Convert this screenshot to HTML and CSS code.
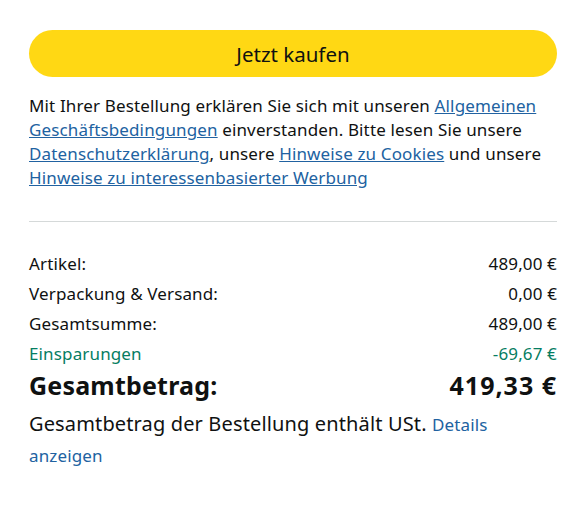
FILE: index.html
```html
<!DOCTYPE html>
<html lang="de">
<head>
    <meta charset="UTF-8">
    <title>Bestellung prüfen</title>
    <link rel="stylesheet" href="styles.css">
</head>
<body>
    <div class="checkout">
        <button class="buy-button" type="button">Jetzt kaufen</button>

        <p class="legal">
            Mit Ihrer Bestellung erklären Sie sich mit unseren <a href="#">Allgemeinen Geschäftsbedingungen</a>
            einverstanden. Bitte lesen Sie unsere <a href="#">Datenschutzerklärung</a>, unsere
            <a href="#">Hinweise zu Cookies</a> und unsere <a href="#">Hinweise zu interessenbasierter Werbung</a>
        </p>

        <hr class="divider">

        <!-- Zusammenfassung -->
        <div class="summary">
            <div class="row"><span>Artikel:</span><span>489,00 €</span></div>
            <div class="row"><span>Verpackung &amp; Versand:</span><span>0,00 €</span></div>
            <div class="row"><span>Gesamtsumme:</span><span>489,00 €</span></div>
            <div class="row savings"><span>Einsparungen</span><span>-69,67 €</span></div>
            <div class="row total"><span>Gesamtbetrag:</span><span class="amount">419,33 €</span></div>
        </div>

        <p class="vat">Gesamtbetrag der Bestellung enthält USt. <a href="#">Details anzeigen</a></p>
    </div>
</body>
</html>
```
FILE: styles.css
```css
body {
    margin: 0;
    background-color: #fff;
    color: #0f1111;
    font-family: "Noto Sans", sans-serif;
    font-size: 17px;
    letter-spacing: 0.14px;
}
.checkout {
    padding: 30px 30px 0 29px;
}
.buy-button {
    display: block;
    width: 100%;
    height: 47px;
    border: none;
    border-radius: 24px;
    background-color: #ffd814;
    color: #0f1111;
    font-family: inherit;
    font-size: 20.5px;
    letter-spacing: 0;
}
a {
    color: #2162a1;
}
.legal {
    margin: 17px 0 0;
    line-height: 24px;
}
.divider {
    margin: 31px 0 0;
    border: none;
    border-top: 1px solid #d5d9d9;
}
.summary {
    margin-top: 27px;
}
.row {
    display: flex;
    justify-content: space-between;
    line-height: 30px;
}
.savings {
    color: #067d62;
}
.total {
    font-size: 25px;
    font-weight: bold;
    line-height: 33px;
    letter-spacing: 0.2px;
}
.total .amount {
    letter-spacing: 1px;
}
.vat {
    margin: 7px 0 0;
    font-size: 20px;
    line-height: 30px;
}
.vat a {
    font-size: 17px;
    text-decoration: none;
}
```
